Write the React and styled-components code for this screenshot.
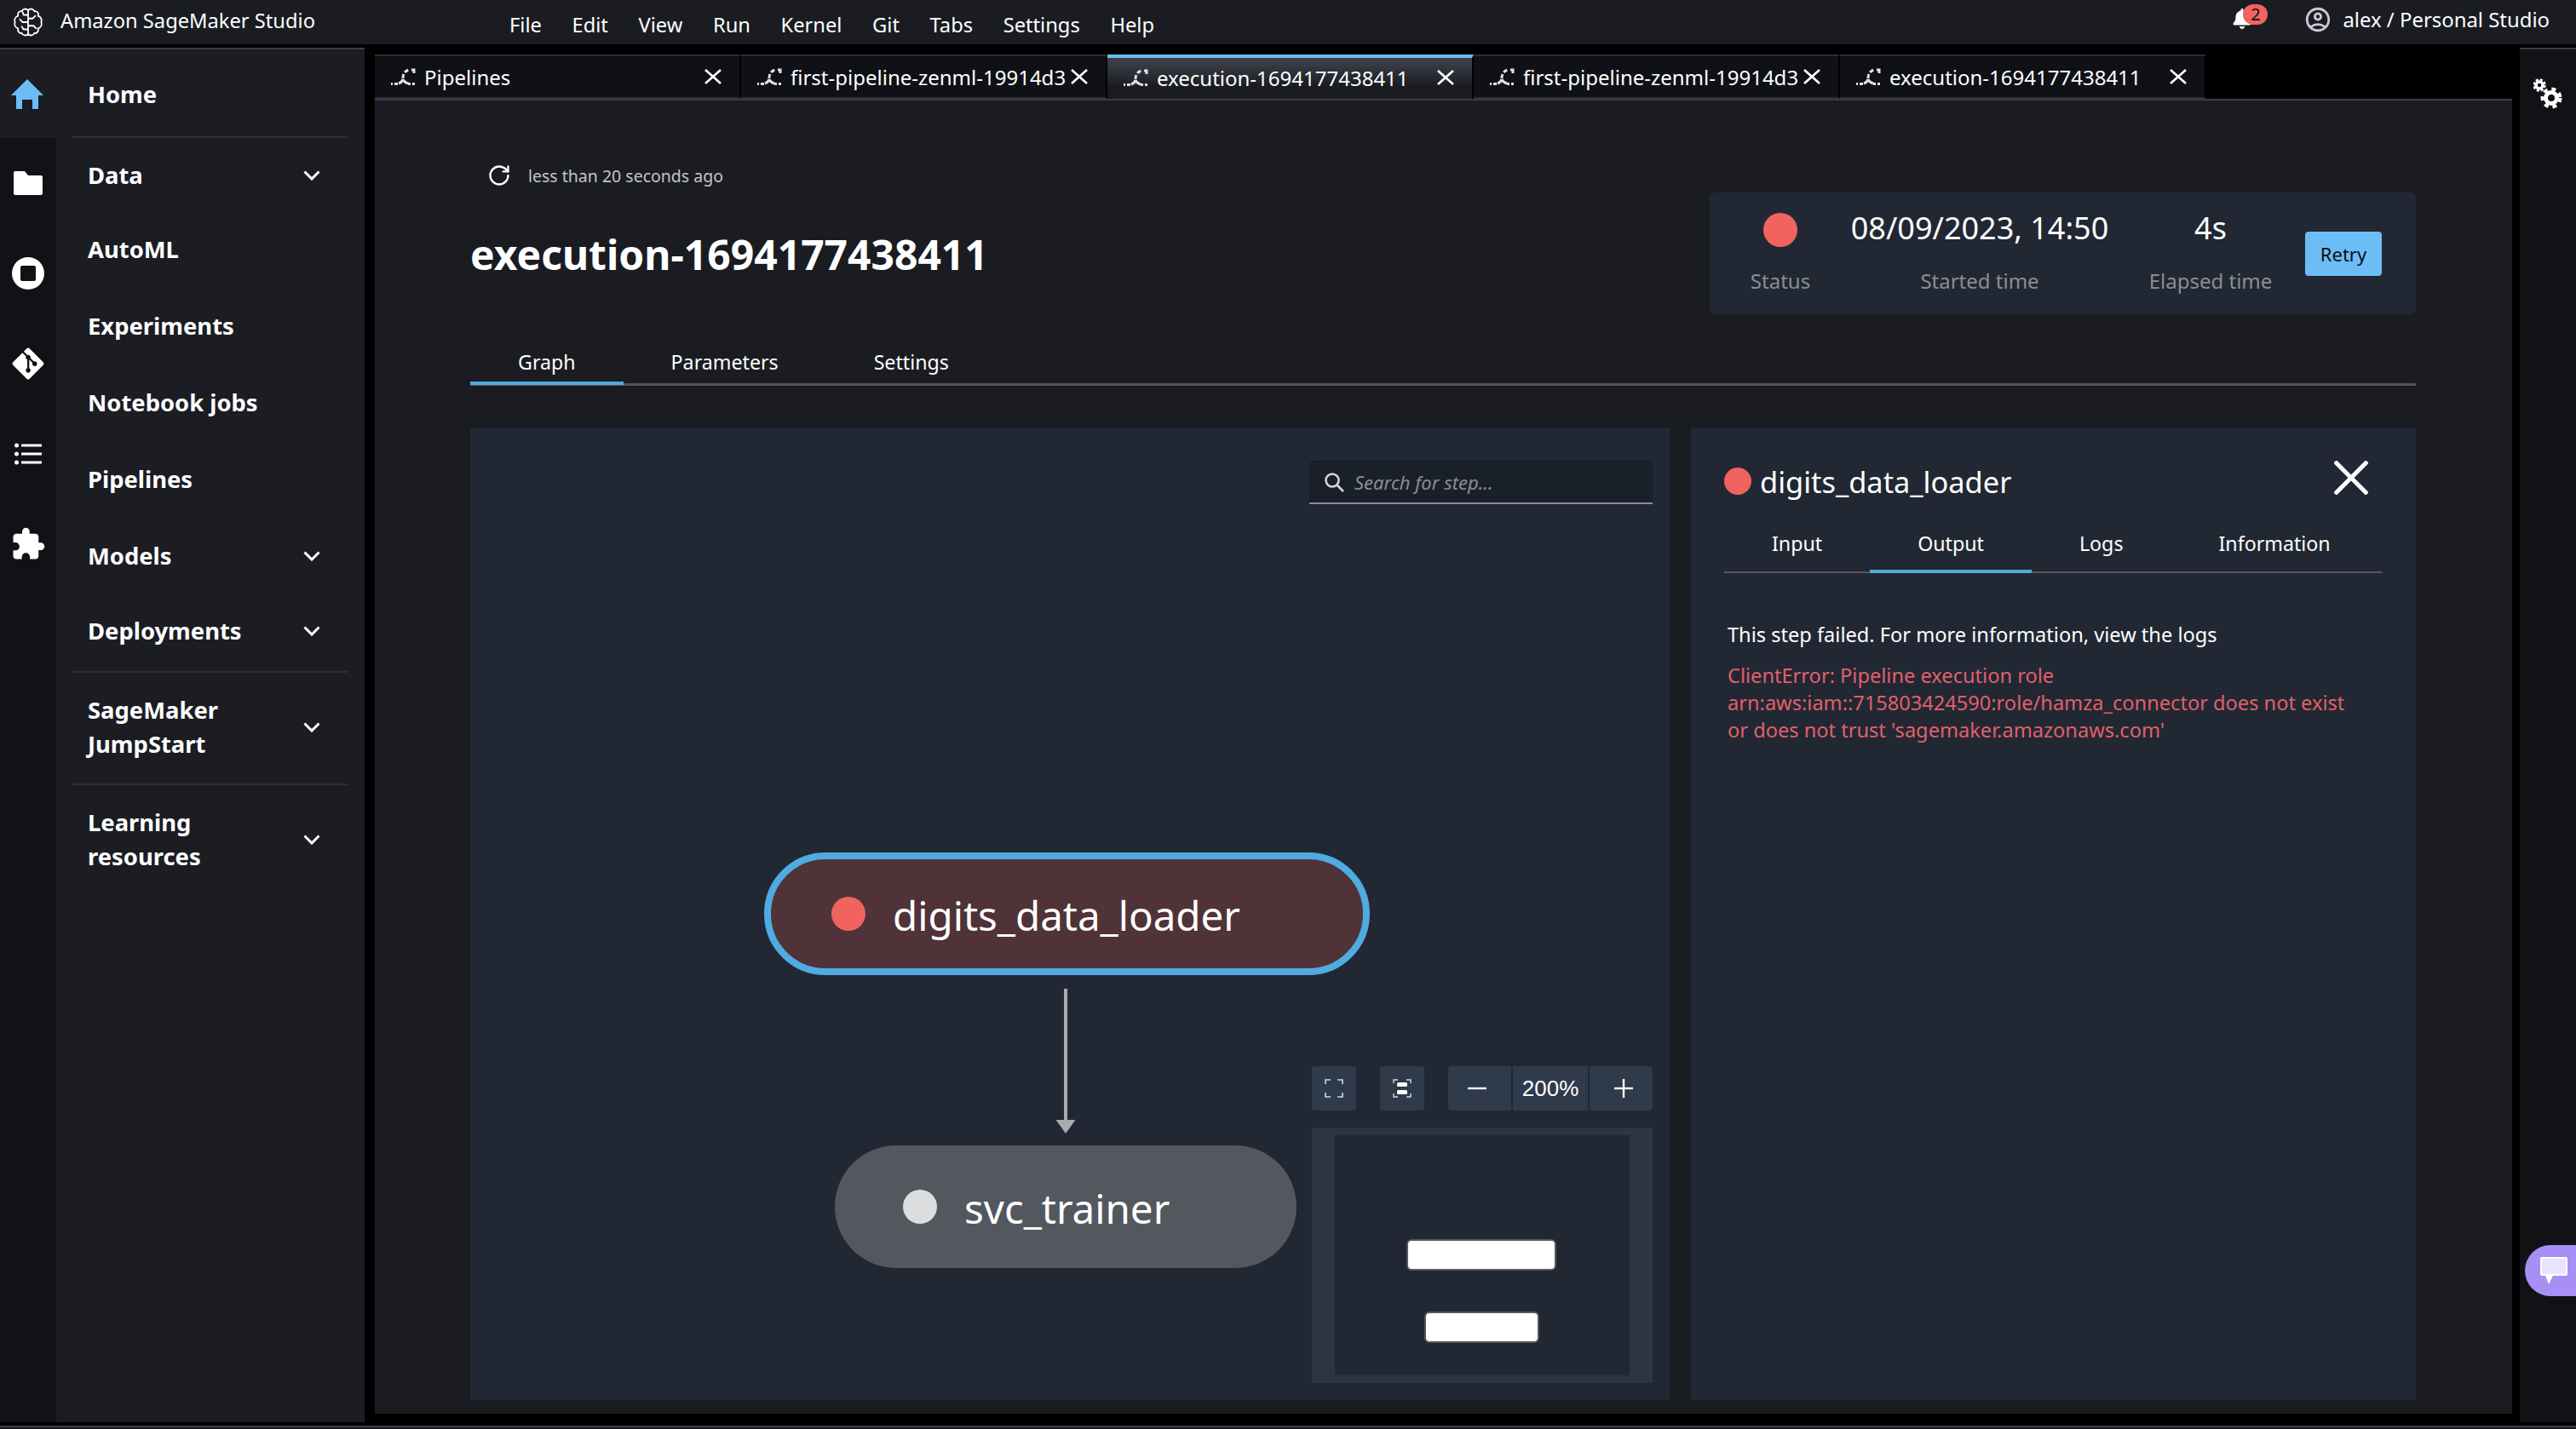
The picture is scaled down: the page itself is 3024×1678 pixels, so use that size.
import React from "react";
import styled, { createGlobalStyle } from "styled-components";
import { RotateCw } from "lucide-react";
import { FaBell, FaGitAlt } from "react-icons/fa";
import { MdExtension, MdOutlineAccountCircle } from "react-icons/md";

const Global = createGlobalStyle`
  html, body { margin: 0; padding: 0; background: #000; }
  body { font-family: "Noto Sans", sans-serif; color: #fff; }
  * { box-sizing: border-box; }
`;

const Page = styled.div`
  width: 3024px; height: 1678px; display: flex; flex-direction: column; background: #000; overflow: hidden;
`;
const TopBar = styled.header`
  height: 52px; flex: none; display: flex; align-items: center; background: #1a1c22; padding: 0 31px 0 16px; font-size: 23.7px;
`;
const AppTitle = styled.div` margin-left: 21px; margin-top: -4px; width: 300px; white-space: nowrap; `;
const Menu = styled.nav` margin-left: 227px; display: flex; gap: 35.6px; margin-top: 6px; `;
const MenuItem = styled.span``;
const TopRight = styled.div` margin-left: auto; display: flex; align-items: center; margin-top: -7px; `;
const BellWrap = styled.div` position: relative; width: 42px; height: 28px; margin-right: 42px; `;
const Badge = styled.span`
  position: absolute; left: 13px; top: -4px; width: 29px; height: 24px; border-radius: 12px; background: #f0635f; color: #111;
  font-size: 20px; line-height: 24px; text-align: center;
`;
const UserName = styled.span` margin-left: 12px; font-size: 23.9px; white-space: nowrap; `;

const Body = styled.div` flex: 1; display: flex; min-height: 0; `;
const Sidebar = styled.aside`
  margin-top: 4px; margin-bottom: 4px; width: 428px; display: flex; flex: none; background: #1b1d23; border-top: 2px solid #3b3d46;
`;
const Rail = styled.div` width: 66px; flex: none; display: flex; flex-direction: column; `;
const RailHome = styled.div` height: 104px; display: flex; align-items: center; justify-content: center; flex: none; padding-right: 2px; `;
const RailRest = styled.div` flex: 1; background: #101216; display: flex; flex-direction: column; `;
const RailIcon = styled.div` height: 106px; display: flex; align-items: center; justify-content: center; flex: none; color: #fff; padding-right: 1px; `;
const NavPanel = styled.nav` flex: 1; display: flex; flex-direction: column; `;
const NavRow = styled.div`
  height: ${p => p.$h}px; flex: none; display: flex; align-items: center; justify-content: space-between; padding: ${p => p.$top || 0}px 52px 0 37px;
  font-size: 27.4px; font-weight: 700; line-height: 40px;
`;
const NavDivider = styled.div`
  height: 2px; flex: none; margin: ${p => p.$mt || 0}px 20px ${p => p.$mb || 0}px 18px; background: #2d2f37;
`;

const Main = styled.main` margin-left: 12px; width: 2509px; flex: none; display: flex; flex-direction: column; padding-top: 12px; margin-bottom: 14px; `;
const TabBar = styled.div` height: 52px; flex: none; display: flex; `;
const FileTab = styled.div`
  width: 430px; flex: none; display: flex; align-items: center; padding: 0 21px 0 18px; font-size: 24px; white-space: nowrap;
  border-right: 2px solid #000;
  ${p => p.$active
    ? `background: linear-gradient(#3c3f48 4px, #1a1c22 34px); border-top: 4px solid #6cbdf5; padding-bottom: 2px;`
    : `background: #101116; border-top: 2px solid #2c2e36; border-bottom: 2px solid #2c2e36;`}
`;
const TabIcon = styled.span` display: flex; flex: none; margin-right: 10px; `;
const FileTabClose = styled.span` margin-left: auto; display: flex; flex: none; `;
const Content = styled.section`
  flex: 1; min-height: 0; background: #1a1c22; border-top: 2px solid #3a3c44; padding: 72px 113px 16px 112px; display: flex; flex-direction: column;
`;
const Header = styled.div` height: 179px; flex: none; display: flex; justify-content: space-between; align-items: flex-end; `;
const HeaderLeft = styled.div` align-self: flex-start; display: flex; flex-direction: column; `;
const Refreshed = styled.div`
  height: 32px; display: flex; align-items: center; gap: 20px; padding-left: 20px; font-size: 19.5px; color: #c4c5c8;
`;
const Title = styled.h1` margin: 47px 0 0; font-size: 48px; line-height: 60px; font-weight: 700; white-space: nowrap; `;
const StatusCard = styled.div`
  width: 829px; height: 143px; background: #212833; border-radius: 6px; display: flex; align-items: flex-start;
`;
const StatCol = styled.div`
  width: ${p => p.$w}px; margin-left: ${p => p.$ml}px; flex: none; display: flex; flex-direction: column; align-items: center; padding-top: 22px;
`;
const StatValue = styled.div` height: 40px; font-size: 36px; line-height: 40px; white-space: nowrap; `;
const StatusDot = styled.span`
  display: block; width: 40px; height: 40px; margin-top: 2px; border-radius: 50%; background: #f0635f;
`;
const StatLabel = styled.div` margin-top: 26px; font-size: 24px; line-height: 32px; color: #8b8e93; white-space: nowrap; `;
const Dot = styled.span`
  display: block; flex: none; width: ${p => p.$d}px; height: ${p => p.$d}px; border-radius: 50%; background: ${p => p.$c || "#f0635f"};
`;
const RetryButton = styled.button`
  align-self: center; margin-left: 16px; width: 90px; height: 52px; border: 0; border-radius: 4px; background: #6cbdf5; color: #0b0d10;
  font: 22px "Noto Sans", sans-serif; padding: 0;
`;
const TabRow = styled.div`
  display: flex; flex: none; border-bottom: 3px solid #55575c; margin-top: 31px;
`;
const Tab = styled.div`
  padding: 0 56px; height: 50px; font-size: 23.2px; line-height: 50px; white-space: nowrap; position: relative;
  ${p => p.$active ? `&::after { content: ""; position: absolute; left: 0; right: 0; bottom: -2px; height: 4px; background: #4fabe0; }` : ""}
`;
const Panels = styled.div` flex: 1; min-height: 0; display: flex; gap: 25px; margin-top: 49px; `;
const Canvas = styled.div` width: 1408px; flex: none; position: relative; background: #212833; `;
const SearchBox = styled.div`
  position: absolute; left: 985px; top: 39px; width: 403px; height: 51px; display: flex; align-items: center; gap: 12px; padding-left: 17px;
  background: #1a202a; border-top: 1px solid #101318; border-radius: 8px 8px 0 0; border-bottom: 2px solid #8a8d99;
  font-size: 22px; font-style: italic; color: #8a8d93;
`;
const Node = styled.div`
  position: absolute; display: flex; align-items: center; gap: 33px; height: 144px; border-radius: 72px; font-size: 47.5px;
  left: ${p => p.$x}px; top: ${p => p.$y}px; width: ${p => p.$w}px; padding-left: ${p => p.$pad}px;
  background: ${p => p.$bg}; ${p => p.$selected ? "border: 8px solid #4fabe0;" : ""}
`;
const NodeLabel = styled.span` margin-top: 2px; margin-left: -1px; `;
const ArrowHolder = styled.div` position: absolute; left: 687px; top: 659px; `;
const Controls = styled.div` position: absolute; left: 988px; top: 750px; display: flex; gap: 28px; `;
const ControlBtn = styled.div`
  width: 52px; height: 52px; background: #2f3a4a; border-radius: 4px; display: flex; align-items: center; justify-content: center;
`;
const ZoomGroup = styled.div` display: flex; gap: 2px; border-radius: 4px; overflow: hidden; `;
const ZoomCell = styled.div`
  width: ${p => p.$w}px; height: 52px; background: #2f3a4a; display: flex; align-items: center; justify-content: center;
  padding: 0 ${p => p.$pr || 0}px 0 ${p => p.$pl || 0}px; font: 26px "Liberation Sans", sans-serif;
`;
const Minimap = styled.div` position: absolute; left: 988px; top: 822px; width: 400px; height: 300px; background: #2b3543; padding: 9px 27px; `;
const MinimapInner = styled.div`
  height: 282px; background: #212833; display: flex; flex-direction: column; align-items: center; padding: 122px 2px 0 0; gap: 48px;
`;
const MiniNode = styled.div` width: ${p => p.$w}px; height: 37px; background: #fff; border: 2px solid #55575c; border-radius: 6px; `;

const Detail = styled.div` flex: 1; min-width: 0; background: #212833; padding: 39px 40px 0 39px; display: flex; flex-direction: column; `;
const DetailHead = styled.div` height: 48px; display: flex; align-items: center; gap: 10px; font-size: 34.4px; `;
const DetailClose = styled.span` margin-left: auto; margin-right: 16px; margin-top: -8px; display: flex; `;
const DetailTabs = styled(TabRow)` margin-top: 25px; border-bottom-width: 2px; `;
const DetailTab = styled(Tab)` height: 57px; line-height: 48px; `;
const DetailText = styled.p` margin: 56px 0 0 4px; font-size: 23.6px; line-height: 32px; `;
const ErrorText = styled.p` margin: 16px 0 0 4px; font-size: 23.6px; line-height: 32px; color: #e0606a; `;

const RightRail = styled.aside`
  margin-left: 9px; margin-top: 4px; margin-bottom: 4px; flex: 1; background: #101216; border-top: 2px solid #3b3d46; position: relative;
  display: flex; flex-direction: column; align-items: center; padding-top: 34px;
`;
const ChatTab = styled.div`
  position: absolute; left: 6px; top: 1404px; width: 60px; height: 60px; border-radius: 30px 0 0 30px; background: #a78ff5;
  display: flex; align-items: center; justify-content: center; padding-left: 8px;
`;
const BottomBar = styled.div` height: 4px; flex: none; background: #1a1c22; border-top: 2px solid #3a3c48; `;

const BrainLogo = () => (
  <svg width="34" height="34" viewBox="0 0 32 32" fill="none" stroke="#fff" strokeWidth="1.7" strokeLinejoin="round" strokeLinecap="round">
    <path d="M16 3C14 .5 10 1 9 4 6 3.5 4 6 5 9 2 10 .5 13 1.5 16 .5 19 2 22 5 23 4 26 6.5 29 9 28 10 31 14 31.5 16 29 18 31.5 22 31 23 28 25.5 29 28 26 27 23 30 22 31.5 19 30.5 16 31.5 13 30 10 27 9 28 6 26 3.5 23 4 22 1 18 .5 16 3Z" />
    <path d="M16 3V29M16 12H21L24 9M16 20H22L25 23M16 16H10L7 13M16 8H11L10 5M16 24H11L9 21" />
  </svg>
);
const Cross = ({ w = 20, h = 18, s = 2.6 }) => (
  <svg width={w} height={h} viewBox={`0 0 ${w} ${h}`} stroke="#fff" strokeWidth={s}>
    <line x1="1" y1="1" x2={w - 1} y2={h - 1} /><line x1={w - 1} y1="1" x2="1" y2={h - 1} />
  </svg>
);
const PipeIcon = () => (
  <svg width="30" height="20" viewBox="0 0 30 20" fill="none" stroke="#e2e2e6" strokeWidth="3">
    <path d="M1 18.5h2M5 18.5h4M21 18.5h3M26 18.5h3" />
    <path d="M10 18c3-1 4-2 5-5M15 13c1 3 3 4 6 5" />
    <path d="M15 12c0-6 3-9 7-10" strokeDasharray="5 2.5" />
    <path d="M25 2h3v4" />
  </svg>
);
const Chevron = () => (
  <svg width="20" height="12" viewBox="0 0 20 12" fill="none" stroke="#fff" strokeWidth="3"><path d="M1.5 1.5 10 10l8.5-8.5" /></svg>
);
const HomeIcon = () => (
  <svg width="38" height="35" viewBox="0 0 38 35" fill="#6cbdf5">
    <path d="M19 0 38 19H32V35H25V24H13V35H6V19H0Z" />
  </svg>
);
const FolderIcon = () => (
  <svg width="34" height="28" viewBox="0 0 34 28" fill="#fff">
    <path d="M2 0H13L17 5H32a2 2 0 0 1 2 2V26a2 2 0 0 1-2 2H2a2 2 0 0 1-2-2V2a2 2 0 0 1 2-2Z" />
  </svg>
);
const StopIcon = () => (
  <svg width="38" height="38" viewBox="0 0 38 38">
    <circle cx="19" cy="19" r="19" fill="#fff" />
    <rect x="10" y="10" width="18" height="18" rx="2" fill="#101216" />
  </svg>
);
const ListIcon = () => (
  <svg width="32" height="26" viewBox="0 0 32 26" fill="#fff">
    <circle cx="2.5" cy="3" r="2.5" /><circle cx="2.5" cy="13" r="2.5" /><circle cx="2.5" cy="23" r="2.5" />
    <rect x="8" y="1.5" width="24" height="3" /><rect x="8" y="11.5" width="24" height="3" /><rect x="8" y="21.5" width="24" height="3" />
  </svg>
);
const Gears = () => (
  <svg width="34" height="36" viewBox="0 0 34 36" fill="none" stroke="#fff">
    <circle cx="7" cy="8" r="4" strokeWidth="3.5" />
    <circle cx="7" cy="8" r="6.5" strokeWidth="2.5" strokeDasharray="3.1 2" />
    <circle cx="21" cy="23" r="6.5" strokeWidth="5" />
    <circle cx="21" cy="23" r="10.5" strokeWidth="4" strokeDasharray="5 4.9" />
  </svg>
);
const Magnifier = () => (
  <svg width="24" height="24" viewBox="0 0 24 24" fill="none" stroke="#d5d6da" strokeWidth="2.6">
    <circle cx="10" cy="10" r="7.5" /><line x1="15.5" y1="15.5" x2="23" y2="23" />
  </svg>
);
const Arrow = () => (
  <svg width="24" height="170" viewBox="0 0 24 170" fill="#a9abaf">
    <rect x="10" y="0" width="4" height="156" /><path d="M0.5 154H23.5L12 170Z" />
  </svg>
);
const FitIcon = () => (
  <svg width="22" height="22" viewBox="0 0 22 22" fill="none" stroke="#d8dade" strokeWidth="1.6">
    <path d="M1 6V1H7M15 1H21V6M21 16V21H15M7 21H1V16" />
  </svg>
);
const CenterIcon = () => (
  <svg width="22" height="22" viewBox="0 0 22 22" fill="none" stroke="#d8dade" strokeWidth="1.4">
    <path d="M1 5V1H6M16 1H21V5M21 17V21H16M6 21H1V17" />
    <rect x="5" y="4" width="12" height="5" rx="1.5" fill="#fff" stroke="none" />
    <rect x="5" y="13" width="12" height="5" rx="1.5" fill="#fff" stroke="none" />
  </svg>
);
const ZoomSign = ({ plus }) => (
  <svg width="24" height="24" viewBox="0 0 24 24" stroke="#fff" strokeWidth="2.4">
    <line x1="1" y1="12" x2="23" y2="12" />{plus && <line x1="12" y1="1" x2="12" y2="23" />}
  </svg>
);
const ChatIcon = () => (
  <svg width="32" height="32" viewBox="0 0 32 32">
    <path d="M2 0H30a2 2 0 0 1 2 2V20a2 2 0 0 1-2 2H15L10 32 6 22H2a2 2 0 0 1-2-2V2a2 2 0 0 1 2-2Z" fill="#fff" />
    <rect x="2" y="2" width="28" height="18" rx="1" fill="#e9e4fd" />
  </svg>
);

const menu = ["File", "Edit", "View", "Run", "Kernel", "Git", "Tabs", "Settings", "Help"];
const fileTabs = ["Pipelines", "first-pipeline-zenml-19914d3", "execution-1694177438411", "first-pipeline-zenml-19914d3", "execution-1694177438411"];

export default function App() {
  return (
    <Page>
      <Global />
      <TopBar>
        <BrainLogo />
        <AppTitle>Amazon SageMaker Studio</AppTitle>
        <Menu>{menu.map(m => <MenuItem key={m}>{m}</MenuItem>)}</Menu>
        <TopRight>
          <BellWrap><FaBell size={24} color="#fff" /><Badge>2</Badge></BellWrap>
          <MdOutlineAccountCircle size={34} color="#c9cad6" />
          <UserName>alex / Personal Studio</UserName>
        </TopRight>
      </TopBar>
      <Body>
        <Sidebar>
          <Rail>
            <RailHome><HomeIcon /></RailHome>
            <RailRest>
              <RailIcon><FolderIcon /></RailIcon>
              <RailIcon><StopIcon /></RailIcon>
              <RailIcon><FaGitAlt size={42} /></RailIcon>
              <RailIcon><ListIcon /></RailIcon>
              <RailIcon><MdExtension size={42} /></RailIcon>
            </RailRest>
          </Rail>
          <NavPanel>
            <NavRow $h={102} $top={3}>Home</NavRow>
            <NavDivider />
            <NavRow $h={86} $top={2}>Data<Chevron /></NavRow>
            <NavRow $h={90}>AutoML</NavRow>
            <NavRow $h={90}>Experiments</NavRow>
            <NavRow $h={90}>Notebook jobs</NavRow>
            <NavRow $h={90}>Pipelines</NavRow>
            <NavRow $h={89}>Models<Chevron /></NavRow>
            <NavRow $h={88}>Deployments<Chevron /></NavRow>
            <NavDivider $mt={3} />
            <NavRow $h={128}><span>SageMaker<br />JumpStart</span><Chevron /></NavRow>
            <NavDivider $mt={2} />
            <NavRow $h={128}><span>Learning<br />resources</span><Chevron /></NavRow>
          </NavPanel>
        </Sidebar>
        <Main>
          <TabBar>
            {fileTabs.map((t, i) => (
              <FileTab key={i} $active={i === 2}>
                <TabIcon><PipeIcon /></TabIcon>{t}
                <FileTabClose><Cross /></FileTabClose>
              </FileTab>
            ))}
          </TabBar>
          <Content>
            <Header>
              <HeaderLeft>
                <Refreshed><RotateCw size={28} color="#fff" strokeWidth={2} />less than 20 seconds ago</Refreshed>
                <Title>execution-1694177438411</Title>
              </HeaderLeft>
              <StatusCard>
                <StatCol $w={86} $ml={40}>
                  <StatValue><StatusDot /></StatValue>
                  <StatLabel>Status</StatLabel>
                </StatCol>
                <StatCol $w={302} $ml={40}>
                  <StatValue>08/09/2023, 14:50</StatValue>
                  <StatLabel>Started time</StatLabel>
                </StatCol>
                <StatCol $w={190} $ml={25}>
                  <StatValue>4s</StatValue>
                  <StatLabel>Elapsed time</StatLabel>
                </StatCol>
                <RetryButton>Retry</RetryButton>
              </StatusCard>
            </Header>
            <TabRow>
              <Tab $active>Graph</Tab>
              <Tab>Parameters</Tab>
              <Tab>Settings</Tab>
            </TabRow>
            <Panels>
              <Canvas>
                <SearchBox><Magnifier />Search for step...</SearchBox>
                <Node $x={345} $y={499} $w={711} $pad={71} $bg="#4f3338" $selected>
                  <Dot $d={40} /><NodeLabel>digits_data_loader</NodeLabel>
                </Node>
                <ArrowHolder><Arrow /></ArrowHolder>
                <Node $x={428} $y={843} $w={542} $pad={80} $bg="#53585f">
                  <Dot $d={40} $c="#dcdddf" /><NodeLabel>svc_trainer</NodeLabel>
                </Node>
                <Controls>
                  <ControlBtn><FitIcon /></ControlBtn>
                  <ControlBtn><CenterIcon /></ControlBtn>
                  <ZoomGroup>
                    <ZoomCell $w={74} $pr={6}><ZoomSign /></ZoomCell>
                    <ZoomCell $w={88}>200%</ZoomCell>
                    <ZoomCell $w={74} $pl={6}><ZoomSign plus /></ZoomCell>
                  </ZoomGroup>
                </Controls>
                <Minimap>
                  <MinimapInner>
                    <MiniNode $w={176} />
                    <MiniNode $w={135} />
                  </MinimapInner>
                </Minimap>
              </Canvas>
              <Detail>
                <DetailHead>
                  <Dot $d={32} />digits_data_loader
                  <DetailClose><Cross w={40} h={40} s={5} /></DetailClose>
                </DetailHead>
                <DetailTabs>
                  <DetailTab>Input</DetailTab>
                  <DetailTab $active>Output</DetailTab>
                  <DetailTab>Logs</DetailTab>
                  <DetailTab>Information</DetailTab>
                </DetailTabs>
                <DetailText>This step failed. For more information, view the logs</DetailText>
                <ErrorText>
                  ClientError: Pipeline execution role<br />
                  arn:aws:iam::715803424590:role/hamza_connector does not exist<br />
                  or does not trust 'sagemaker.amazonaws.com'
                </ErrorText>
              </Detail>
            </Panels>
          </Content>
        </Main>
        <RightRail>
          <Gears />
          <ChatTab><ChatIcon /></ChatTab>
        </RightRail>
      </Body>
      <BottomBar />
    </Page>
  );
}
